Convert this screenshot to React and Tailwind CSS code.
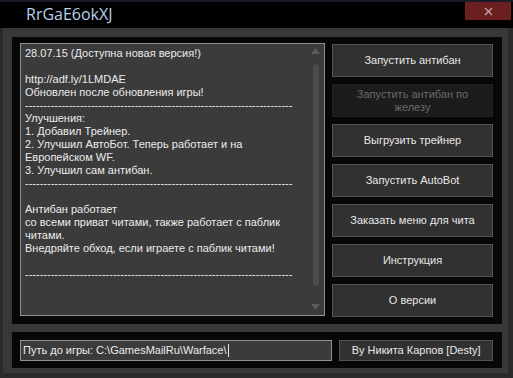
import React from "react";

const lines = [
  "28.07.15 (Доступна новая версия!)",
  "",
  "http://adf.ly/1LMDAE",
  "Обновлен после обновления игры!",
  "-".repeat(73),
  "Улучшения:",
  "1. Добавил Трейнер.",
  "2. Улучшил АвтоБот. Теперь работает и на",
  "Европейском WF.",
  "3. Улучшил сам антибан.",
  "-".repeat(73),
  "",
  "Антибан работает",
  "со всеми приват читами, также работает с паблик",
  "читами.",
  "Внедряйте обход, если играете с паблик читами!",
  "",
  "-".repeat(73),
];

const buttons = [
  { label: "Запустить антибан" },
  { label: "Запустить антибан по\nжелезу", disabled: true },
  { label: "Выгрузить трейнер" },
  { label: "Запустить AutoBot" },
  { label: "Заказать меню для чита" },
  { label: "Инструкция" },
  { label: "О версии" },
];

function ScrollBar() {
  return (
    <div className="w-[17px] flex flex-col items-center pt-[4px] pb-[5px]">
      <svg width="9" height="6" viewBox="0 0 9 6">
        <path d="M4.5 0 L9 6 L0 6 Z" fill="#5c5c5c" />
      </svg>
      <div className="mt-[10px] w-[6px] h-[222px] rounded-full bg-[#4c4c4c]" />
      <svg className="mt-auto" width="9" height="6" viewBox="0 0 9 6">
        <path d="M0 0 L9 0 L4.5 6 Z" fill="#5c5c5c" />
      </svg>
    </div>
  );
}

export default function App() {
  return (
    <div className="w-[513px] h-[378px] flex flex-col bg-[#2a2a2a] overflow-hidden font-['Liberation_Sans',Arial,sans-serif] text-[11px]">
      <div className="h-[2px] bg-[#1b1828]" />

      {/* title bar */}
      <div className="h-[26px] bg-black flex pl-[26px]">
        <span className="font-['Open_Sans',sans-serif] text-[16px] leading-[24px] text-[#b8d0e8]">
          RrGaE6okXJ
        </span>
        <div className="ml-auto mr-[2px] w-[46px] h-[18px] bg-[#6b1f1f] flex items-center justify-center">
          <svg width="9" height="9" viewBox="0 0 9 9">
            <path d="M1 1 L8 8 M8 1 L1 8" stroke="#b9a4a4" strokeWidth="1.4" />
          </svg>
        </div>
      </div>

      {/* window body */}
      <div className="flex-1 ml-[3px] mr-[5px] mb-[5px] bg-[#383838] pt-[9px] pl-[9px] pr-[6px] pb-[5px] flex flex-col gap-[8px]">
        <div className="h-[287px] bg-[#070707] flex pl-[8px] pt-[6px] pr-[9px] gap-[7px]">
          <div className="w-[305px] h-[273px] border border-[#8c9494] bg-[#3b3b3b] flex">
            <div className="flex-1 pl-[4px] pt-[3px] text-[#ececec] leading-[13px] whitespace-pre overflow-hidden">
              {lines.map((l, i) => (
                <div key={i} className="h-[13px]">{l}</div>
              ))}
            </div>
            <ScrollBar />
          </div>

          <div className="w-[161px] pt-[1px] flex flex-col gap-[7px]">
            {buttons.map((b, i) => (
              <div
                key={i}
                className={
                  b.disabled
                    ? "h-[33px] border border-[#222222] bg-[#1c1c1c] text-[#6b6b6b] flex items-center justify-center text-center leading-[13px] whitespace-pre"
                    : "h-[33px] border border-[#545454] bg-[#313131] text-[#e8e8e8] flex items-center justify-center text-center"
                }
              >
                {b.label}
              </div>
            ))}
          </div>
        </div>

        <div className="h-[36px] bg-[#070707] flex pl-[8px] pt-[8px] pr-[9px] gap-[7px]">
          <div className="w-[313px] h-[21px] border border-[#8c9494] bg-[#3b3b3b] flex items-center pl-[2px] text-[#ececec]">
            <span>{"Путь до игры: C:\\GamesMailRu\\Warface\\"}</span>
            <span className="ml-[1px] w-[1px] h-[13px] bg-[#e6e6e6]" />
          </div>
          <div className="w-[154px] h-[21px] border border-[#545454] bg-[#313131] text-[#e8e8e8] flex items-center justify-center">
            By Никита Карпов [Desty]
          </div>
        </div>
      </div>
    </div>
  );
}
